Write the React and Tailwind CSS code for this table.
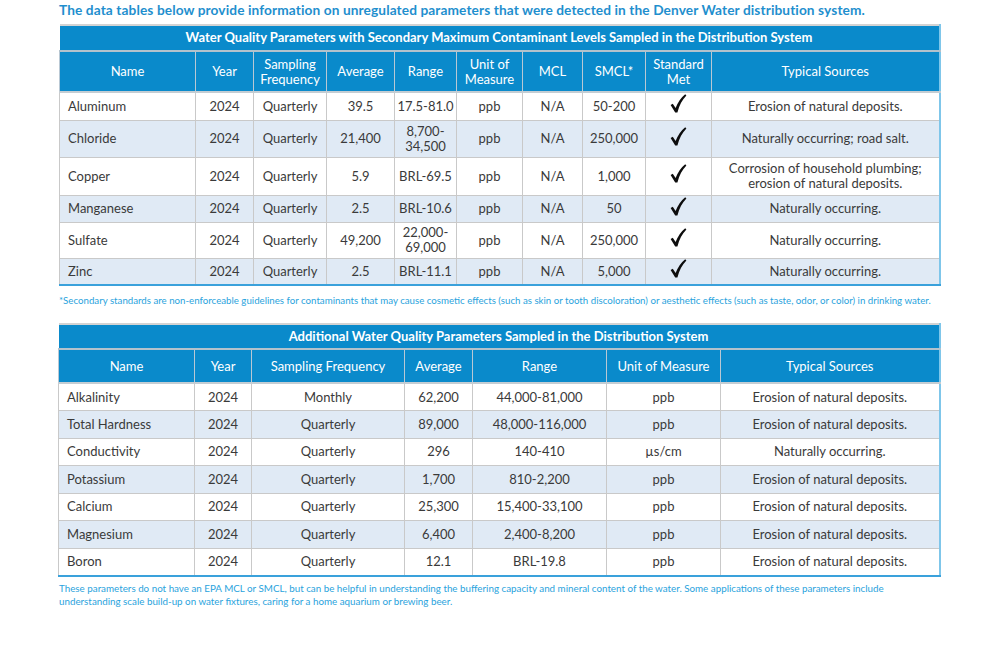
const FONT = { fontFamily: 'Lato, "Open Sans", sans-serif' };

const SECONDARY = [
  { name: 'Aluminum', avg: '39.5', range: ['17.5-81.0'], smcl: '50-200', src: ['Erosion of natural deposits.'], h: 'h-[28px]' },
  { name: 'Chloride', avg: '21,400', range: ['8,700-', '34,500'], smcl: '250,000', src: ['Naturally occurring; road salt.'], h: 'h-[37px]' },
  { name: 'Copper', avg: '5.9', range: ['BRL-69.5'], smcl: '1,000', src: ['Corrosion of household plumbing;', 'erosion of natural deposits.'], h: 'h-[38px]' },
  { name: 'Manganese', avg: '2.5', range: ['BRL-10.6'], smcl: '50', src: ['Naturally occurring.'], h: 'h-[27px]' },
  { name: 'Sulfate', avg: '49,200', range: ['22,000-', '69,000'], smcl: '250,000', src: ['Naturally occurring.'], h: 'h-[36px]' },
  { name: 'Zinc', avg: '2.5', range: ['BRL-11.1'], smcl: '5,000', src: ['Naturally occurring.'], h: 'h-[27px]' },
];

const ADDITIONAL = [
  { name: 'Alkalinity', freq: 'Monthly', avg: '62,200', range: '44,000-81,000', unit: 'ppb', src: 'Erosion of natural deposits.' },
  { name: 'Total Hardness', freq: 'Quarterly', avg: '89,000', range: '48,000-116,000', unit: 'ppb', src: 'Erosion of natural deposits.' },
  { name: 'Conductivity', freq: 'Quarterly', avg: '296', range: '140-410', unit: 'µs/cm', src: 'Naturally occurring.' },
  { name: 'Potassium', freq: 'Quarterly', avg: '1,700', range: '810-2,200', unit: 'ppb', src: 'Erosion of natural deposits.' },
  { name: 'Calcium', freq: 'Quarterly', avg: '25,300', range: '15,400-33,100', unit: 'ppb', src: 'Erosion of natural deposits.' },
  { name: 'Magnesium', freq: 'Quarterly', avg: '6,400', range: '2,400-8,200', unit: 'ppb', src: 'Erosion of natural deposits.' },
  { name: 'Boron', freq: 'Quarterly', avg: '12.1', range: 'BRL-19.8', unit: 'ppb', src: 'Erosion of natural deposits.' },
];

// hand-drawn tick, thin left stroke and heavy right stroke like the print version
function Check() {
  return (
    <svg width="17" height="19" viewBox="0 0 17 19" className="inline-block -mt-[7px]">
      <path d="M0.6 11 L2.8 9.8 L5.6 14 C7.8 8.4 11 3.8 15.2 0.3 L16.4 1.6 C12.2 5.8 9.4 11.2 7.4 18.6 L5.2 18.6 Z" fill="#0d0d0d" />
    </svg>
  );
}

const th = 'border-x border-[#b9c8d4] font-normal text-white leading-[15px] px-1';
const td = 'border border-[#c9c9c9] text-center leading-[15px] px-1';

function Lines({ items }) {
  return items.map((l, i) => <div key={i}>{l}</div>);
}

export default function App() {
  return (
    <div className="w-[991px] h-[649px] bg-white text-[13px] text-[#3a3a3a]" style={FONT}>
      <div className="ml-[59px] w-[880px] pt-[1px]">
        <p className="text-[#1f8fce] font-bold text-[13.7px] leading-[17px] tracking-[0.1px] whitespace-nowrap">
          The data tables below provide information on unregulated parameters that were detected in the Denver Water distribution system.
        </p>

        <table className="mt-[6px] w-[880px] table-fixed border-collapse border-t-2 border-t-[#d3d3d3] border-r-2 border-r-[#7fc6ea] border-b-2 border-b-[#3aa1db]">
          <colgroup>
            <col className="w-[136px]" />
            <col className="w-[58px]" />
            <col className="w-[73px]" />
            <col className="w-[68px]" />
            <col className="w-[62px]" />
            <col className="w-[66px]" />
            <col className="w-[60px]" />
            <col className="w-[63px]" />
            <col className="w-[66px]" />
            <col className="w-[228px]" />
          </colgroup>
          <thead className="bg-[#0a8acb]">
            <tr className="h-[26px] border-b-2 border-b-[#b3c2cc]">
              <th colSpan={10} className="text-white font-bold text-[13px]">
                Water Quality Parameters with Secondary Maximum Contaminant Levels Sampled in the Distribution System
              </th>
            </tr>
            <tr className="h-[41px] border-b-2 border-b-[#c4cdd3]">
              <th className={th}>Name</th>
              <th className={th}>Year</th>
              <th className={th}>Sampling<br />Frequency</th>
              <th className={th}>Average</th>
              <th className={th}>Range</th>
              <th className={th}>Unit of<br />Measure</th>
              <th className={th}>MCL</th>
              <th className={th}>SMCL*</th>
              <th className={th}>Standard<br />Met</th>
              <th className={th}>Typical Sources</th>
            </tr>
          </thead>
          <tbody>
            {SECONDARY.map((r, i) => (
              <tr key={r.name} className={`${r.h} ${i % 2 ? 'bg-[#e0eaf5]' : 'bg-white'}`}>
                <td className={`${td} !text-left pl-[8px]`}>{r.name}</td>
                <td className={td}>2024</td>
                <td className={td}>Quarterly</td>
                <td className={td}>{r.avg}</td>
                <td className={`${td} !px-0 whitespace-nowrap`}><Lines items={r.range} /></td>
                <td className={td}>ppb</td>
                <td className={td}>N/A</td>
                <td className={td}>{r.smcl}</td>
                <td className={td}><Check /></td>
                <td className={td}><Lines items={r.src} /></td>
              </tr>
            ))}
          </tbody>
        </table>

        <p className="mt-[8px] text-[9.7px] leading-[12px] text-[#2aa3dd] whitespace-nowrap">
          *Secondary standards are non-enforceable guidelines for contaminants that may cause cosmetic effects (such as skin or tooth discoloration) or aesthetic effects (such as taste, odor, or color) in drinking water.
        </p>

        <table className="mt-[17px] -ml-[1px] w-[881px] table-fixed border-collapse border-t-2 border-t-[#d3d3d3] border-r-2 border-r-[#7fc6ea] border-b-2 border-b-[#3aa1db]">
          <colgroup>
            <col className="w-[136px]" />
            <col className="w-[57px]" />
            <col className="w-[153px]" />
            <col className="w-[68px]" />
            <col className="w-[134px]" />
            <col className="w-[114px]" />
            <col className="w-[219px]" />
          </colgroup>
          <thead className="bg-[#0a8acb]">
            <tr className="h-[25px] border-b-2 border-b-[#b3c2cc]">
              <th colSpan={7} className="text-white font-bold text-[13px]">
                Additional Water Quality Parameters Sampled in the Distribution System
              </th>
            </tr>
            <tr className="h-[34px] border-b-2 border-b-[#c4cdd3]">
              <th className={th}>Name</th>
              <th className={th}>Year</th>
              <th className={th}>Sampling Frequency</th>
              <th className={th}>Average</th>
              <th className={th}>Range</th>
              <th className={th}>Unit of Measure</th>
              <th className={th}>Typical Sources</th>
            </tr>
          </thead>
          <tbody>
            {ADDITIONAL.map((r, i) => (
              <tr key={r.name} className={`h-[27.5px] ${i % 2 ? 'bg-[#e0eaf5]' : 'bg-white'}`}>
                <td className={`${td} !text-left pl-[8px]`}>{r.name}</td>
                <td className={td}>2024</td>
                <td className={td}>{r.freq}</td>
                <td className={td}>{r.avg}</td>
                <td className={td}>{r.range}</td>
                <td className={td}>{r.unit}</td>
                <td className={td}>{r.src}</td>
              </tr>
            ))}
          </tbody>
        </table>

        <p className="mt-[5px] w-[840px] text-[9.8px] leading-[13px] text-[#2aa3dd]">
          These parameters do not have an EPA MCL or SMCL, but can be helpful in understanding the buffering capacity and mineral content of the water. Some applications of these parameters include understanding scale build-up on water fixtures, caring for a home aquarium or brewing beer.
        </p>
      </div>
    </div>
  );
}
